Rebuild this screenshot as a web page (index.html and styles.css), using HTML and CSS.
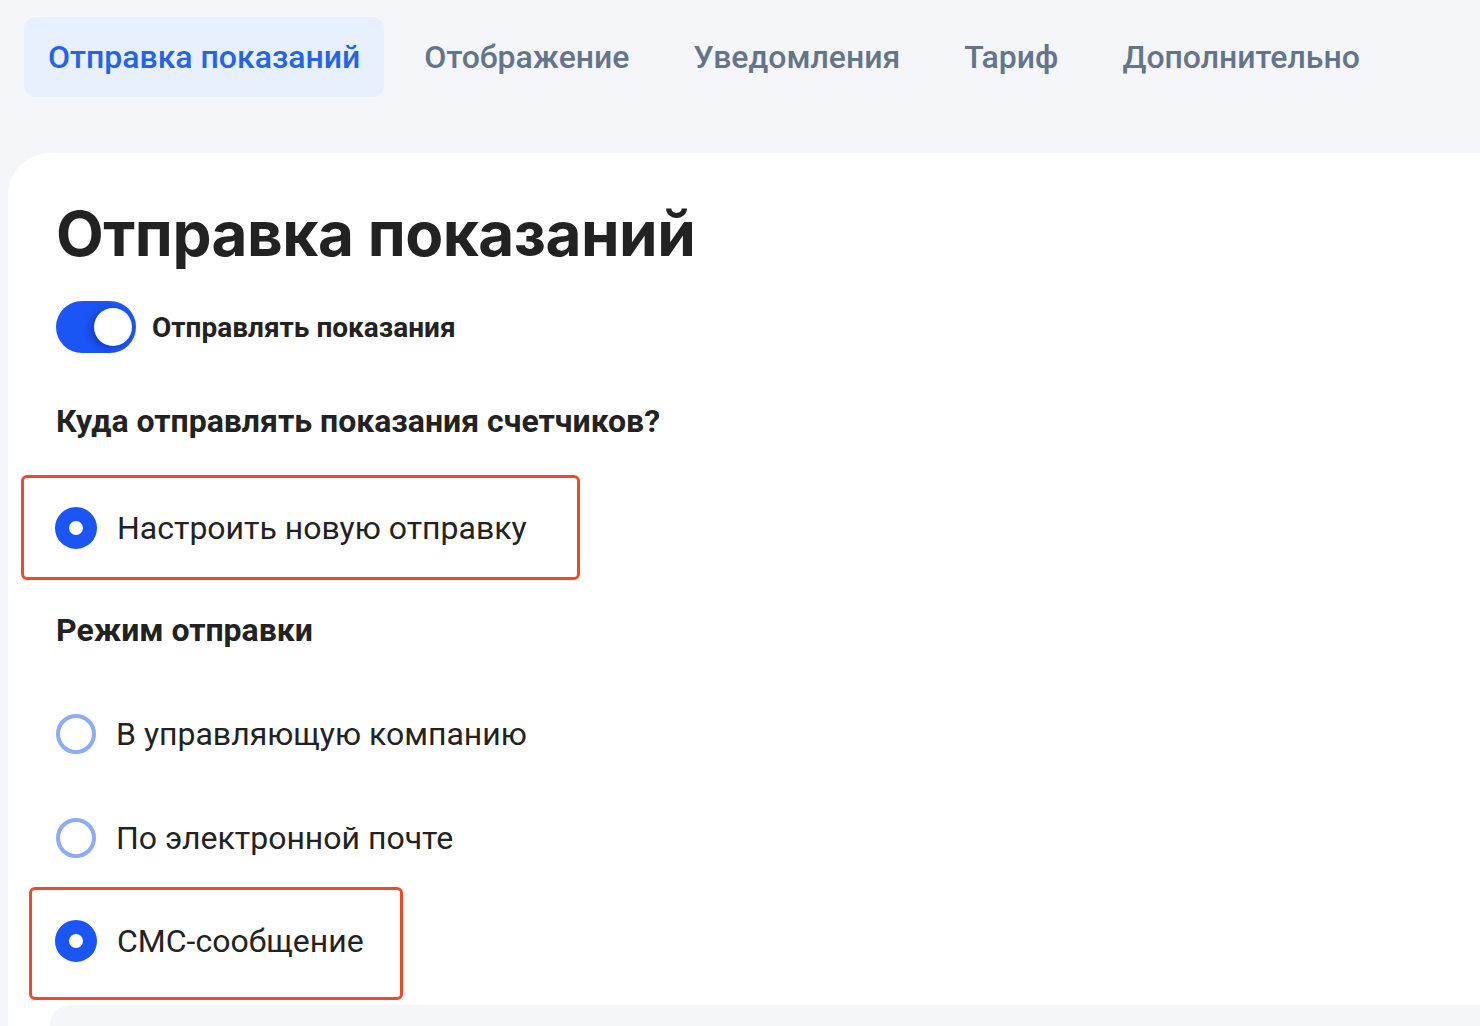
FILE: index.html
```html
<!DOCTYPE html>
<html lang="ru">
  <head>
    <meta charset="UTF-8" />
    <meta name="viewport" content="width=device-width, initial-scale=1.0" />
    <title>Настройки</title>
    <link rel="stylesheet" href="styles.css">
  </head>
  <body>
    <nav class="tabs">
      <button class="tab selected">Отправка показаний</button>
      <button class="tab">Отображение</button>
      <button class="tab">Уведомления</button>
      <button class="tab">Тариф</button>
      <button class="tab">Дополнительно</button>
    </nav>

    <main class="card">
      <h1>Отправка показаний</h1>

      <label class="toggleRow">
        <span class="toggle on"><span class="knob"></span></span>
        <span class="toggleText">Отправлять показания</span>
      </label>

      <h2 class="question">Куда отправлять показания счетчиков?</h2>
      <label class="option marked markedWide">
        <span class="radio checked"></span>
        <span class="optionText">Настроить новую отправку</span>
      </label>

      <h2 class="mode">Режим отправки</h2>
      <div class="options">
        <label class="option">
          <span class="radio"></span>
          <span class="optionText">В управляющую компанию</span>
        </label>
        <label class="option">
          <span class="radio"></span>
          <span class="optionText">По электронной почте</span>
        </label>
        <label class="option marked markedSms">
          <span class="radio checked"></span>
          <span class="optionText">СМС-сообщение</span>
        </label>
      </div>

      <section class="subcard"></section>
    </main>
  </body>
</html>
```

FILE: styles.css
```css
body {
  margin: 0;
  background-color: #f5f6fa;
  font-family: Roboto, "Liberation Sans", sans-serif;
  color: #222222;
  overflow: hidden;
}

.tabs {
  display: flex;
  gap: 16px;
  padding: 17px 0 0 24px;
}

.tab {
  height: 80px;
  padding: 0 24px;
  border: none;
  border-radius: 12px;
  background: none;
  font-family: Roboto, "Liberation Sans", sans-serif;
  font-size: 32px;
  font-weight: 500;
  color: #64748b;
}
.tab.selected {
  background-color: #e8f0fd;
  color: #2563eb;
}

.card {
  margin: 56px 0 0 8px;
  padding: 41px 0 0 48px;
  height: 873px;
  box-sizing: border-box;
  overflow: hidden;
  background-color: #ffffff;
  border-top-left-radius: 42px;
}

h1 {
  margin: 0;
  font-family: Inter, sans-serif;
  font-size: 62px;
  font-weight: 700;
  line-height: 80px;
  letter-spacing: -0.5px;
  color: #222222;
}

.toggleRow {
  display: flex;
  align-items: center;
  gap: 16px;
  margin-top: 27px;
}
.toggle {
  display: flex;
  justify-content: flex-end;
  align-items: center;
  width: 80px;
  height: 52px;
  padding-right: 4px;
  box-sizing: border-box;
  border-radius: 26px;
  background-color: #1b55f5;
}
.knob {
  width: 38px;
  height: 38px;
  border-radius: 50%;
  background-color: #ffffff;
  box-shadow: -4px 2px 6px rgba(0, 20, 120, 0.35);
}
.toggleText {
  font-size: 28px;
  font-weight: 700;
}

h2 {
  margin: 0;
  font-size: 32px;
  font-weight: 700;
  line-height: 40px;
}
.question {
  margin-top: 48px;
}
.mode {
  margin-top: 30px;
}

.option {
  display: flex;
  align-items: center;
  gap: 20px;
  height: 104px;
  box-sizing: border-box;
}
.optionText {
  font-size: 32px;
  font-weight: 400;
  color: #222222;
}

.radio {
  width: 40px;
  height: 40px;
  box-sizing: border-box;
  border: 4px solid #8eabfa;
  border-radius: 50%;
  flex-shrink: 0;
}
.radio.checked {
  width: 42px;
  height: 42px;
  border: 14px solid #1b55f5;
  background-color: #ffffff;
}

.marked {
  border: 3px solid #f0492a;
  border-radius: 6px;
}
.markedWide {
  margin: 34px 0 0 -35px;
  width: 559px;
  height: 105px;
  padding-left: 31px;
}

.options {
  margin-top: 32px;
}
.markedSms {
  margin: -3px 0 0 -27px;
  width: 374px;
  height: 113px;
  padding: 0 0 5px 23px;
}

.subcard {
  margin: 5px 0 0 -6px;
  height: 200px;
  background-color: #f5f6fa;
  border-top-left-radius: 20px;
}
```
